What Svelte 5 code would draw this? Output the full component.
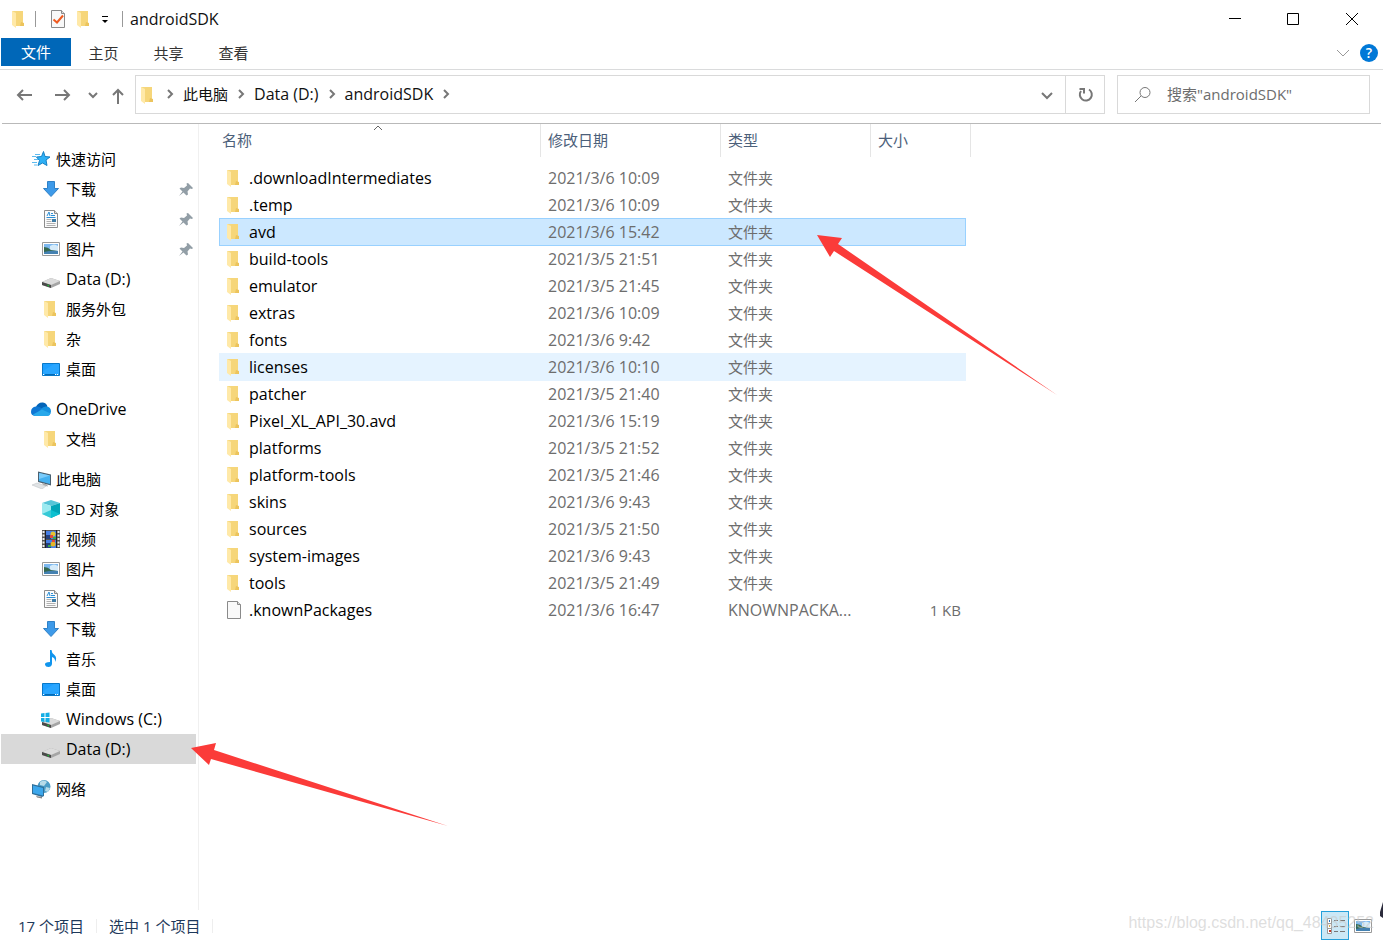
<script lang="ts">
	type Place = { icon: string; label: string; root?: boolean; pinned?: boolean; gap?: boolean };
	type Entry = { name: string; date: string; type: string; size?: string };

	let current = $state("Data (D:)");
	let selected = $state("avd");
	let hovered = $state("licenses");

	const tabs = ["主页", "共享", "查看"];
	const crumbs = ["此电脑", "Data (D:)", "androidSDK"];

	const places: Place[] = [
		{ icon: "star", label: "快速访问", root: true },
		{ icon: "download", label: "下载", pinned: true },
		{ icon: "document", label: "文档", pinned: true },
		{ icon: "picture", label: "图片", pinned: true },
		{ icon: "drive", label: "Data (D:)" },
		{ icon: "folder", label: "服务外包" },
		{ icon: "folder", label: "杂" },
		{ icon: "desktop", label: "桌面" },
		{ icon: "onedrive", label: "OneDrive", root: true, gap: true },
		{ icon: "folder", label: "文档" },
		{ icon: "computer", label: "此电脑", root: true, gap: true },
		{ icon: "cube", label: "3D 对象" },
		{ icon: "video", label: "视频" },
		{ icon: "picture", label: "图片" },
		{ icon: "document", label: "文档" },
		{ icon: "download", label: "下载" },
		{ icon: "music", label: "音乐" },
		{ icon: "desktop", label: "桌面" },
		{ icon: "system", label: "Windows (C:)" },
		{ icon: "drive", label: "Data (D:)" },
		{ icon: "network", label: "网络", root: true, gap: true }
	];

	const entries: Entry[] = [
		{ name: ".downloadIntermediates", date: "2021/3/6 10:09", type: "文件夹" },
		{ name: ".temp", date: "2021/3/6 10:09", type: "文件夹" },
		{ name: "avd", date: "2021/3/6 15:42", type: "文件夹" },
		{ name: "build-tools", date: "2021/3/5 21:51", type: "文件夹" },
		{ name: "emulator", date: "2021/3/5 21:45", type: "文件夹" },
		{ name: "extras", date: "2021/3/6 10:09", type: "文件夹" },
		{ name: "fonts", date: "2021/3/6 9:42", type: "文件夹" },
		{ name: "licenses", date: "2021/3/6 10:10", type: "文件夹" },
		{ name: "patcher", date: "2021/3/5 21:40", type: "文件夹" },
		{ name: "Pixel_XL_API_30.avd", date: "2021/3/6 15:19", type: "文件夹" },
		{ name: "platforms", date: "2021/3/5 21:52", type: "文件夹" },
		{ name: "platform-tools", date: "2021/3/5 21:46", type: "文件夹" },
		{ name: "skins", date: "2021/3/6 9:43", type: "文件夹" },
		{ name: "sources", date: "2021/3/5 21:50", type: "文件夹" },
		{ name: "system-images", date: "2021/3/6 9:43", type: "文件夹" },
		{ name: "tools", date: "2021/3/5 21:49", type: "文件夹" },
		{ name: ".knownPackages", date: "2021/3/6 16:47", type: "KNOWNPACKA...", size: "1 KB" }
	];

	// the drive shows up twice, only the one under the computer gets marked
	const currentIndex = $derived(places.findLastIndex((p) => p.label === current));

	function isLatin(text: string) {
		return /^[\x20-\x7e]+$/.test(text);
	}
</script>

{#snippet icon(name: string)}
	<svg class="icon" viewBox="0 0 20 20" width="20" height="20" aria-hidden="true">
		{#if name === "folder"}
			<path d="M3 2h9v12h3v3H6z" fill="#f5d87f" />
			<path d="M7 2h7v12h1v3H7z" fill="#f6d67a" />
			<path d="M12 13l3 1v3h-4z" fill="#ecc45d" />
			<path d="M3 2l4 2v15l-4-3z" fill="#ffe9a8" />
		{:else if name === "star"}
			<path d="M12.500 2.500l1.500 5 5 .5-4 3 1 5.500-4.500-2.500L7 16.500 8.500 11.500 5.500 8l5-.5z" fill="#2eb0f5" stroke="#1680c4" />
			<path d="M4 5.500h5M1 7.500h4M3 10.500h4M1 13.500h5M3 16h3" stroke="#5dbbef" />
		{:else if name === "download"}
			<path d="M6.500 2.500h7v7h4l-7.500 8-7.500-8h4z" fill="#3d9ae9" stroke="#2f81c7" />
		{:else if name === "document"}
			<path d="M3.500 1.500h10l3 3v14h-13z" fill="#fbfbfb" stroke="#8c8c8c" />
			<path d="M13.500 1.500v3h3" fill="#ddd" stroke="#8c8c8c" />
			<path d="M6 7l2-4 1 4M10 4.500h2M10 6.500h4M5.500 8.500h9" stroke="#2c8fd6" fill="none" />
			<path d="M5.500 10.500h5M5.500 12.500h5M5.500 14.500h9M5.500 16.500h9" stroke="#b0b0b0" />
			<path d="M11 10h4v3h-4z" fill="#3f7da6" />
		{:else if name === "picture"}
			<path d="M1.500 3.500h17v13h-17z" fill="#fff" stroke="#9a9a9a" />
			<path d="M3 5h14v10H3z" fill="#7db8ef" />
			<path d="M9 7q4-3 8 0v5h-8z" fill="#d5ebfa" />
			<path d="M3 8q4 0 7 3l7 1v1H3z" fill="#35684f" />
			<path d="M3 13q7-2 14-1v3H3z" fill="#4481b1" />
		{:else if name === "drive" || name === "system"}
			<path d="M1 13l9-4 9 3v3l-9 4-9-3z" fill="#a5a5a5" />
			<path d="M1 13l9-4 9 3-9 4z" fill="#dcdcdc" />
			<path d="M1 13l9 3v3l-9-3z" fill="#4a4a4a" />
			<path d="M6.500 15.500l1.500 .5v1.500l-1.500-.5z" fill="#1dbd35" />
			{#if name === "system"}
				<path d="M0 4.500l3.500-.5v4H0zM4.500 4L8.500 3.500V8h-4zM0 9h3.500v4L0 12.500zM4.500 9h4v4.500l-4-.5z" fill="#14aee5" />
			{/if}
		{:else if name === "desktop"}
			<path d="M1.500 4.500h17v12h-17z" fill="#1e9fff" stroke="#0878c8" />
			<path d="M2 16v-4L13 5h5v11z" fill="#35adff" opacity=".5" />
			<path d="M4 15.500h11" stroke="#056bb5" />
			<path d="M2 15.500h1M14 15.500h1M16 15.500h1" stroke="#fff" />
		{:else if name === "onedrive"}
			<path d="M5 8q2-5 7-4.500 3.500 .5 4.500 4l-6 5z" fill="#0364b8" />
			<path d="M0 13q0-5 5-5.500 3-.5 6 2l4 3-9 4.500H4q-4-.5-4-4z" fill="#0f77d4" />
			<path d="M10 10q2-2.800 5.500-2.500Q20 8 20 12.500 19.500 17 15 17H4z" fill="#1490df" />
			<path d="M2 15.500l9-5 8.500 4Q18.500 17 16 17H4.500Q3 17 2 15.500z" fill="#28a8ea" />
		{:else if name === "computer"}
			<path d="M7 2.500l13 3v11l-13-3.500z" fill="#4a6070" />
			<path d="M8 4l11 2.500v8.500L8 12z" fill="#45b1f0" />
			<path d="M8 4l11 2.500L8 10z" fill="#7acbfa" />
			<path d="M11 14l5 1.500 1 2-5-1z" fill="#aaa" />
			<path d="M1 16l5-2 9 3-4 3z" fill="#e0e3e5" stroke="#b9bec2" stroke-width=".5" />
		{:else if name === "cube"}
			<path d="M1 4l9-3 9 3-9 3z" fill="#55c5d8" />
			<path d="M1 4l9 3v12l-9-4z" fill="#9beaf0" />
			<path d="M10 7l9-3v11l-9 4z" fill="#00a5b8" />
			<path d="M1 15l9-4v8z" fill="#35c9d6" />
			<path d="M10 11l9 4-9 4z" fill="#0cc0d0" />
		{:else if name === "video"}
			<path d="M1 1h18v18H1z" fill="#555" />
			<path d="M5 2h10v8H5zM5 11h10v8H5z" fill="#467fe5" />
			<path d="M5 6h5v4H5zM5 14h5v5H5z" fill="#24407e" />
			<circle cx="12" cy="5" r="2.500" fill="#e5c532" />
			<circle cx="12" cy="15" r="2.500" fill="#e5b52a" />
			<path d="M9 6h3v3H9zM11 11h3v2h-3z" fill="#e34b38" />
			<path d="M12 8h3v2h-3zM7 16h3v2H7z" fill="#38a84a" />
			<path d="M2.500 2v17M17.500 2v17" stroke="#eee" stroke-width="2" stroke-dasharray="2 1.500" />
			<path d="M4.500 1v18M15.500 1v18" stroke="#222" />
		{:else if name === "music"}
			<path d="M9 1h1.500q0 3 3 5 3 3 .5 7 .5-4-3-5v7q-.5 3-3.500 3T4 15.500 9 13z" fill="#1195ed" />
		{:else if name === "network"}
			<circle cx="13" cy="7.500" r="6.500" fill="#4b9cc6" />
			<path d="M9 3q4-3 7 0l-3 4-4-1zM15 8l4 1-2 4-3-1z" fill="#b7dbe9" />
			<path d="M1 5l12 3v9l-2 1L1 15z" fill="#2f6f99" />
			<path d="M2 6.500l10 2.500v7.500L2 14z" fill="#3ca7ec" />
			<path d="M5 17l6 1v1.500l-5-1z" fill="#888" />
		{:else if name === "file"}
			<path d="M3.500 1.500h10l3 3v14h-13z" fill="#f9f9f9" stroke="#8a8a8a" />
			<path d="M13.500 1.500v3h3" fill="#ddd" stroke="#8a8a8a" />
		{:else if name === "checked"}
			<path d="M3.500 1.500h10l3 3v14h-13z" fill="#f8f8f8" stroke="#8a8a8a" />
			<path d="M13.500 1.500v3h3" fill="#ddd" stroke="#8a8a8a" />
			<path d="M5.500 10.500l3.500 3 6-7" fill="none" stroke="#ee5a20" stroke-width="2" />
		{:else if name === "pin"}
			<path d="M12 4l5 5-1 1-2-.5-2.500 3 .5 3-1.500 1-3-3L3 17l3.500-4.500-3-3 1.500-1 3 .5 3-2.500-.5-2z" fill="#929ea6" />
		{:else if name === "details"}
			<path d="M2.500 2.500h4v5h-4zM2.500 7.500h4v5h-4zM2.500 12.500h4v5h-4z" fill="#fff" stroke="#999" />
			<path d="M9 4.500h4M15 4.500h5M9 10.500h4M15 10.500h5M9 15.500h4M15 15.500h5" stroke="#777" />
			<path d="M4 4h1v2H4z" fill="#2877c4" />
			<path d="M4 9h1v2H4z" fill="#d6ab45" />
			<path d="M4 14h2v2H4z" fill="#c43a2c" />
		{/if}
	</svg>
{/snippet}

{#snippet glyph(d: string, color: string, weight: number)}
	<svg class="glyph" viewBox="0 0 20 20" width="20" height="20" aria-hidden="true">
		<path {d} fill="none" stroke={color} stroke-width={weight} />
	</svg>
{/snippet}

<div class="window">
	<header class="titlebar">
		{@render icon("folder")}
		<span class="divider"></span>
		<button class="quick" aria-label="属性">{@render icon("checked")}</button>
		<button class="quick" aria-label="新建文件夹">{@render icon("folder")}</button>
		<button class="customize" aria-label="自定义快速访问工具栏">
			<svg viewBox="0 0 8 8" width="8" height="8"><path d="M1 1.500h6" stroke="#000" /><path d="M1 5h6L4 8z" /></svg>
		</button>
		<span class="divider"></span>
		<h1 class="latin">androidSDK</h1>
		<div class="controls">
			<button aria-label="最小化">{@render glyph("M3 9.500h12", "#000", 1)}</button>
			<button aria-label="最大化">{@render glyph("M3.500 4.500h11v11h-11z", "#000", 1)}</button>
			<button aria-label="关闭">{@render glyph("M4 4l12 12M16 4L4 16", "#000", 1)}</button>
		</div>
	</header>

	<nav class="ribbon">
		<button class="file">文件</button>
		{#each tabs as tab}
			<button class="tab">{tab}</button>
		{/each}
		<button class="expand" aria-label="展开功能区">{@render glyph("M4 7l6 6 6-6", "#999", 1)}</button>
		<button class="help" aria-label="帮助">?</button>
	</nav>

	<div class="location">
		<div class="history">
			<button aria-label="后退">{@render glyph("M17 10H3M8 5l-5 5 5 5", "#777", 2)}</button>
			<button aria-label="前进">{@render glyph("M2 10h14M11 5l5 5-5 5", "#777", 2)}</button>
			<button class="recent" aria-label="最近浏览的位置">{@render glyph("M6 8l4 4 4-4", "#777", 2)}</button>
			<button class="up" aria-label="上移">{@render glyph("M10 19V5M5 10l5-5 5 5", "#777", 2)}</button>
		</div>
		<div class="address">
			{@render icon("folder")}
			{#each crumbs as crumb, i}
				<span class="arrow" class:first={i === 0}>{@render glyph("M8 5l4 4-4 4", "#777", 2)}</span>
				<a href="#{crumb}" class:latin={isLatin(crumb)}>{crumb}</a>
			{/each}
			<span class="arrow">{@render glyph("M8 5l4 4-4 4", "#777", 2)}</span>
			<button class="previous" aria-label="以前的位置">{@render glyph("M5 8l5 5 5-5", "#777", 2)}</button>
			<button class="refresh" aria-label="刷新">{@render glyph("M14 4.500A6 6 0 1 1 6 6M4.500 4H9v4.500", "#777", 2)}</button>
		</div>
		<label class="search">
			<svg viewBox="0 0 16 16" width="16" height="16" aria-hidden="true">
				<circle cx="10" cy="5.500" r="5" fill="none" stroke="#777" />
				<path d="M6 9l-6 6" stroke="#777" />
			</svg>
			<input type="text" placeholder={'搜索"androidSDK"'} aria-label="搜索" />
		</label>
	</div>

	<main class="content">
		<nav class="sidebar">
			{#each places as place, i}
				<button
					class="place"
					class:root={place.root}
					class:gap={place.gap}
					class:current={i === currentIndex}
					onclick={() => (current = place.label)}
				>
					{@render icon(place.icon)}
					<span class="label" class:latin={isLatin(place.label)}>{place.label}</span>
					{#if place.pinned}
						{@render icon("pin")}
					{/if}
				</button>
			{/each}
		</nav>

		<section class="listing">
			<table>
				<colgroup>
					<col class="name-col" />
					<col class="date-col" />
					<col class="type-col" />
					<col class="size-col" />
					<col class="edge-col" />
				</colgroup>
				<thead>
					<tr>
						<th>
							名称
							<svg class="sort" viewBox="0 0 10 6" width="10" height="6" aria-hidden="true">
								<path d="M1 5l4-4 4 4" fill="none" stroke="#666" />
							</svg>
						</th>
						<th>修改日期</th>
						<th>类型</th>
						<th colspan="2">大小</th>
					</tr>
				</thead>
				<tbody>
					{#each entries as entry}
						<tr
							class:selected={entry.name === selected}
							class:hovered={entry.name === hovered}
							onclick={() => (selected = entry.name)}
							onmouseenter={() => (hovered = entry.name)}
						>
							<td class="name">
								<div>
									{@render icon(entry.size ? "file" : "folder")}
									<span class="latin">{entry.name}</span>
								</div>
							</td>
							<td class="latin">{entry.date}</td>
							<td class:latin={isLatin(entry.type)}>{entry.type}</td>
							<td class="size">{entry.size ?? ""}</td>
							<td class="edge"></td>
						</tr>
					{/each}
				</tbody>
			</table>
		</section>
	</main>

	<footer class="status">
		<span>17 个项目</span>
		<span>选中 1 个项目</span>
		<div class="views">
			<button class="active" aria-label="详细信息">{@render icon("details")}</button>
			<button aria-label="大图标">{@render icon("picture")}</button>
		</div>
	</footer>

	<svg class="pointer to-folder" viewBox="0 0 240 160" width="240" height="160" aria-hidden="true">
		<path d="M0 0l25 3-4 6 219 151L17 16l-4 6z" fill="#fb3b39" />
	</svg>
	<svg class="pointer to-drive" viewBox="0 0 257 83" width="257" height="83" aria-hidden="true">
		<path d="M0 5l25-5-2 7 234 76L20 16l-2 6z" fill="#fb3b39" />
	</svg>
	<span class="watermark">https://blog.csdn.net/qq_48435252</span>
	<svg class="pointer corner" viewBox="0 0 3 16" width="3" height="16" aria-hidden="true">
		<path d="M3 0v16l-3-2v-4z" fill="#2b2b3c" />
	</svg>
</div>

<style>
	:global(body) {
		margin: 0;
		background: #fff;
	}

	.window {
		position: relative;
		display: flex;
		flex-direction: column;
		min-height: 100vh;
		overflow: hidden;
		color: #111;
		font-family: "Open Sans", "Noto Sans CJK SC", sans-serif;
		font-size: 15px;
		line-height: 20px;
	}

	.latin {
		font-size: 16px;
	}

	button {
		display: flex;
		align-items: center;
		justify-content: center;
		padding: 0;
		border: none;
		background: none;
		color: inherit;
		font: inherit;
	}

	svg {
		display: block;
		flex: none;
	}

	.titlebar {
		display: flex;
		align-items: center;
		height: 38px;
		padding: 0 2px 0 9px;
	}

	.divider {
		width: 1px;
		height: 16px;
		margin: 0 12px 0 6px;
		background: #999;
	}

	.quick {
		margin-right: 6px;
	}

	.customize {
		width: 10px;
		margin-right: 6px;
	}

	.customize + .divider {
		margin-right: 7px;
	}

	h1 {
		margin: 0;
		font-weight: 400;
	}

	.controls {
		display: flex;
		margin-left: auto;
	}

	.controls button {
		width: 58px;
		height: 38px;
	}

	.ribbon {
		display: flex;
		align-items: flex-start;
		height: 31px;
		padding: 0 5px 0 1px;
		border-bottom: 1px solid #dadbdc;
		color: #333;
	}

	.file {
		width: 70px;
		height: 28px;
		background: #0067b8;
		color: #fff;
	}

	.tab {
		width: 65px;
		height: 30px;
	}

	.expand {
		margin: 5px 7px 0 auto;
	}

	.help {
		width: 18px;
		height: 18px;
		margin-top: 6px;
		border-radius: 50%;
		background: #0078d7;
		color: #fff;
		font-size: 14px;
		font-weight: 600;
	}

	.location {
		display: flex;
		align-items: center;
		height: 49px;
		margin: 0 2px;
		padding: 0 11px 4px 13px;
		border-bottom: 1px solid #b9b9b9;
	}

	.history {
		display: flex;
		width: 120px;
	}

	.history button {
		margin-right: 18px;
	}

	.history .recent {
		width: 10px;
		margin: 0 10px 0 -3px;
	}

	.history .up {
		margin-right: 0;
	}

	.address {
		display: flex;
		flex: 1;
		align-items: center;
		height: 37px;
		margin-right: 12px;
		border: 1px solid #d9d9d9;
	}

	.address > :global(.icon) {
		margin-left: 2px;
	}

	.address a {
		padding-bottom: 2px;
		color: #111;
		text-decoration: none;
	}

	.arrow {
		margin: 0 3px;
	}

	.arrow.first {
		margin-left: 2px;
	}

	.previous {
		margin: 0 8px 0 auto;
	}

	.refresh {
		width: 39px;
		height: 37px;
		border-left: 1px solid #d9d9d9;
	}

	.search {
		display: flex;
		align-items: center;
		gap: 16px;
		box-sizing: border-box;
		width: 253px;
		height: 39px;
		padding: 0 17px;
		border: 1px solid #d9d9d9;
	}

	.search input {
		flex: 1;
		min-width: 0;
		padding: 0 0 2px;
		border: none;
		outline: none;
		font: inherit;
	}

	.search input::placeholder {
		color: #6d6d6d;
		opacity: 1;
	}

	.content {
		display: flex;
		flex: 1;
	}

	.sidebar {
		box-sizing: border-box;
		width: 199px;
		padding: 20px 2px 0 1px;
		border-right: 1px solid #f0f0f0;
	}

	.place {
		gap: 5px;
		justify-content: flex-start;
		width: 195px;
		height: 30px;
		padding-left: 40px;
		color: #000;
		text-align: left;
	}

	.place.root {
		padding-left: 30px;
	}

	.place.gap {
		margin-top: 10px;
	}

	.place.current {
		background: #d9d9d9;
	}

	.label {
		flex: 1;
	}

	.listing {
		flex: 1;
		padding-left: 20px;
	}

	table {
		width: 752px;
		border-spacing: 0;
		table-layout: fixed;
	}

	.name-col {
		width: 322px;
	}

	.date-col {
		width: 180px;
	}

	.type-col {
		width: 150px;
	}

	.size-col {
		width: 95px;
	}

	.edge-col {
		width: 5px;
	}

	th {
		position: relative;
		box-sizing: border-box;
		height: 33px;
		padding: 0 0 2px 7px;
		border-right: 1px solid #e5e5e5;
		color: #4c607a;
		font-weight: 400;
		text-align: left;
	}

	th:first-child {
		padding-left: 3px;
	}

	.sort {
		position: absolute;
		top: 1px;
		left: 50%;
		margin-left: -7px;
	}

	tbody::before {
		display: block;
		height: 8px;
		content: "";
	}

	td {
		box-sizing: border-box;
		height: 27px;
		padding: 0 0 2px 7px;
		color: #6d6d6d;
		white-space: nowrap;
	}

	td.name {
		padding-left: 5px;
		color: #000;
	}

	.name div {
		display: flex;
		gap: 5px;
	}

	.size {
		padding-right: 5px;
		text-align: right;
	}

	.hovered td:not(.edge) {
		background: #e5f3ff;
		box-shadow: 0 -1px #e5f3ff;
	}

	.selected td:not(.edge) {
		background: #cce8ff;
		box-shadow: 0 -1px #99d1ff, inset 0 -1px #99d1ff;
	}

	.selected td.name {
		border-left: 1px solid #99d1ff;
		padding-left: 4px;
	}

	.selected .size {
		border-right: 1px solid #99d1ff;
	}

	.status {
		display: flex;
		align-items: center;
		height: 31px;
		padding: 0 6px 0 18px;
		color: #1e395b;
	}

	.status > span {
		padding-right: 12px;
		margin-right: 12px;
		border-right: 1px solid #eee;
		line-height: 14px;
	}

	.views {
		display: flex;
		margin-left: auto;
	}

	.views button {
		width: 28px;
		height: 29px;
	}

	.views .active {
		box-sizing: border-box;
		border: 1px solid #26a0da;
		background: #cbe8f6;
	}

	.pointer {
		position: absolute;
		pointer-events: none;
	}

	.to-folder {
		top: 235px;
		left: 817px;
	}

	.to-drive {
		top: 743px;
		left: 191px;
	}

	.corner {
		right: 0;
		bottom: 23px;
	}

	.watermark {
		position: absolute;
		right: 9px;
		bottom: 8px;
		color: rgba(200, 200, 200, 0.6);
		font-family: "Liberation Sans", sans-serif;
		font-size: 16px;
		pointer-events: none;
	}
</style>
